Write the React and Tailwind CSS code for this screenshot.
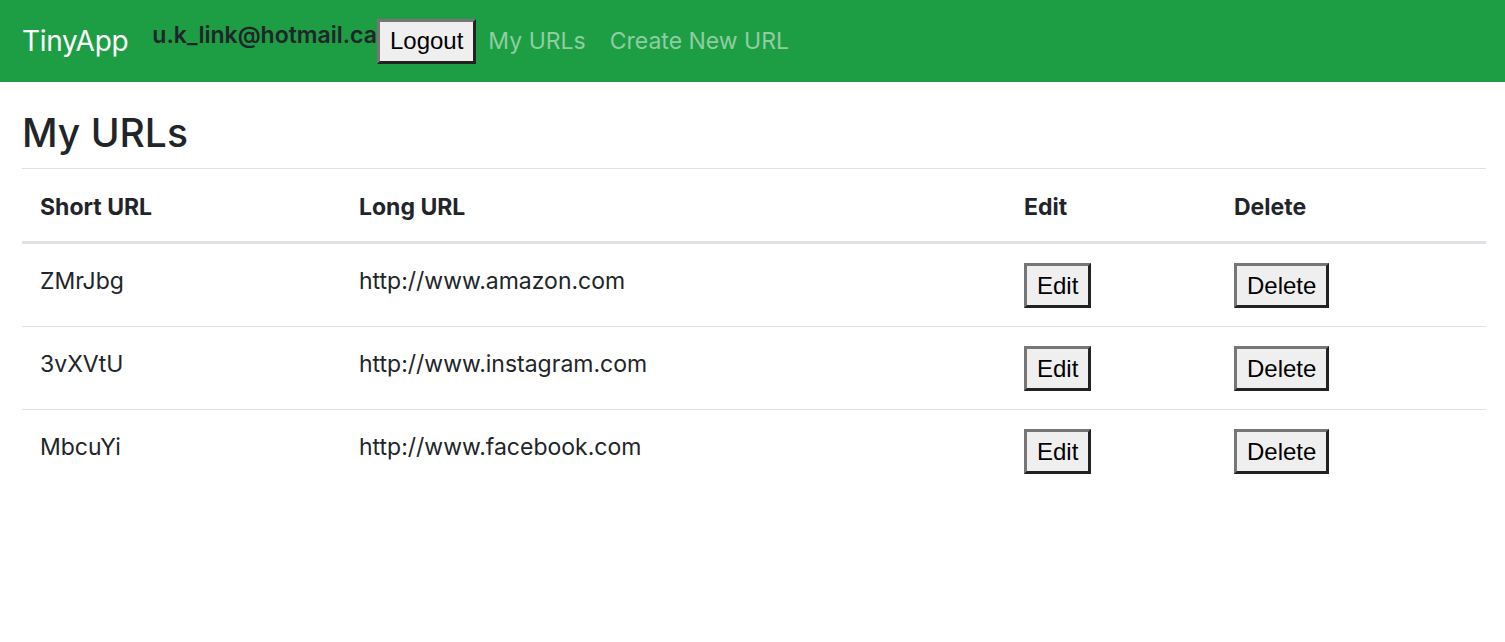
const urls = [
  { short: "ZMrJbg", long: "http://www.amazon.com" },
  { short: "3vXVtU", long: "http://www.instagram.com" },
  { short: "MbcuYi", long: "http://www.facebook.com" },
];

const btn =
  "block bg-[#efefef] text-black text-[24px] leading-[36px] px-[10px] py-[1.5px] border-[3px] border-t-[#767676] border-l-[#767676] border-b-[#222] border-r-[#222] [font-family:'Liberation_Sans',Arial,sans-serif]";

const App = () => {
  return (
    <div className="min-h-[642px] bg-white text-[#212529] [font-family:Inter,'Noto_Sans',sans-serif]">
      <nav className="h-[82px] bg-[#1d9d44] flex items-center px-[22px]">
        <span className="text-white text-[28px] mr-[24px] tracking-[-0.3px]">TinyApp</span>
        <span className="self-start mt-[19px] text-[23px] font-semibold leading-[32px]">
          u.k_link@hotmail.ca
        </span>
        <button className={btn}>Logout</button>
        <a className="px-[12px] text-[23px] text-[#8fcea2]">My URLs</a>
        <a className="px-[12px] text-[23px] text-[#8fcea2]">Create New URL</a>
      </nav>

      <main className="pl-[22px] pr-[19px]">
        <h3 className="mt-[26px] mb-[10px] text-[39px] leading-[50px] font-medium">My URLs</h3>
        <table className="w-full border-collapse text-[23px] leading-[36px]">
          <thead>
            <tr className="border-t-[1.5px] border-b-[3px] border-[#dee2e6]">
              <th className="w-[319px] text-left font-bold px-[18px] pt-[20px] pb-[16px]">Short URL</th>
              <th className="w-[665px] text-left font-bold px-[18px] pt-[20px] pb-[16px]">Long URL</th>
              <th className="w-[210px] text-left font-bold px-[18px] pt-[20px] pb-[16px]">Edit</th>
              <th className="text-left font-bold px-[18px] pt-[20px] pb-[16px]">Delete</th>
            </tr>
          </thead>
          <tbody>
            {urls.map((u) => (
              <tr key={u.short} className="border-t border-[#dee2e6] align-top">
                <td className="px-[18px] pt-[19px] pb-[18px]">{u.short}</td>
                <td className="px-[18px] pt-[19px] pb-[18px]">{u.long}</td>
                <td className="px-[18px] pt-[19px] pb-[18px]">
                  <button className={btn}>Edit</button>
                </td>
                <td className="px-[18px] pt-[19px] pb-[18px]">
                  <button className={btn}>Delete</button>
                </td>
              </tr>
            ))}
          </tbody>
        </table>
      </main>
    </div>
  );
};

export default App;
